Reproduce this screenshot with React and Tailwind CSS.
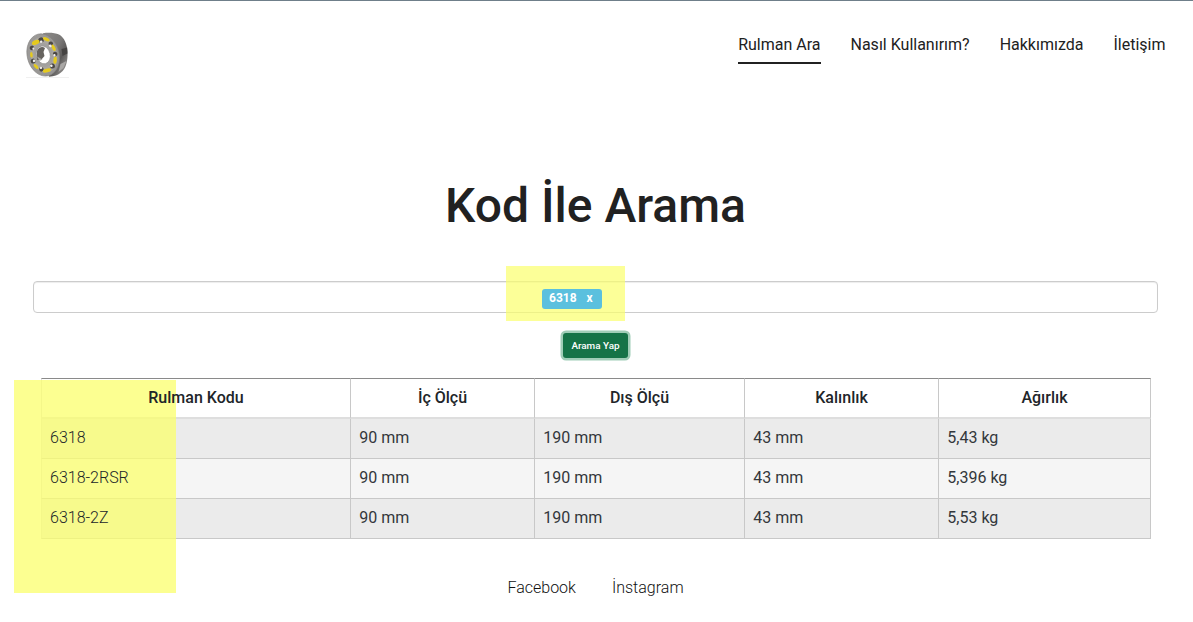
const navLinks = ['Rulman Ara', 'Nasıl Kullanırım?', 'Hakkımızda', 'İletişim'];

const columns = [
  { title: 'Rulman Kodu', width: 'w-[309px]' },
  { title: 'İç Ölçü', width: 'w-[184px]' },
  { title: 'Dış Ölçü', width: 'w-[210px]' },
  { title: 'Kalınlık', width: 'w-[194px]' },
  { title: 'Ağırlık', width: 'w-[212px]' },
];

const bearings = [
  { code: '6318', inner: '90 mm', outer: '190 mm', thickness: '43 mm', weight: '5,43 kg' },
  { code: '6318-2RSR', inner: '90 mm', outer: '190 mm', thickness: '43 mm', weight: '5,396 kg' },
  { code: '6318-2Z', inner: '90 mm', outer: '190 mm', thickness: '43 mm', weight: '5,53 kg' },
];

// Ball bearing seen from a slight angle
const Logo = () => (
  <svg width="44" height="48" viewBox="0 0 44 48">
    <defs>
      <linearGradient id="rim" x1="0" y1="0" x2="1" y2="1">
        <stop offset="0" stopColor="#8b8987" />
        <stop offset="0.45" stopColor="#7a7877" />
        <stop offset="0.65" stopColor="#5c5a59" />
        <stop offset="1" stopColor="#b1afad" />
      </linearGradient>
      <linearGradient id="face" x1="0" y1="0" x2="1" y2="1">
        <stop offset="0" stopColor="#9d9b99" />
        <stop offset="1" stopColor="#959391" />
      </linearGradient>
    </defs>
    <path d="M0 45.500h43" stroke="#ececec" strokeWidth="0.8" />
    <path d="M17 1.300C23 .3 29 1 33 2.500c5.500 3 8 10 8.500 17 .5 9-1.500 17.500-6.500 21-3 2.500-6.500 4-12 4.300Z" fill="url(#rim)" />
    <path d="M35.500 17l5.700-1.500.2 6-4.900 2.500Z" fill="#454342" />
    <path d="M34.500 32l6-3-3 7-5 4Z" fill="#a9a7a5" />
    <g transform="rotate(-14 17 23)">
      <ellipse cx="17.200" cy="23" rx="16" ry="21.400" fill="url(#face)" stroke="#807e7c" strokeWidth="0.6" />
      <ellipse cx="17.800" cy="23" rx="13.200" ry="18" fill="#aaa7a0" />
      <g fill="#4b4845">
        <circle cx="18.700" cy="8" r="2.700" />
        <circle cx="27.300" cy="14" r="2.300" />
        <circle cx="29" cy="25" r="2.300" />
        <circle cx="23.500" cy="36" r="2.500" />
        <circle cx="12" cy="36.500" r="2.300" />
        <circle cx="6" cy="26.500" r="2.400" />
        <circle cx="8" cy="13.500" r="2.300" />
      </g>
      <g fill="#e5ca1d">
        <ellipse cx="13" cy="9" rx="4" ry="2.200" transform="rotate(-8 13 9)" />
        <ellipse cx="24" cy="8.500" rx="3.500" ry="1.700" transform="rotate(38 24 8.500)" />
        <ellipse cx="29" cy="18.500" rx="1.600" ry="3.500" transform="rotate(-12 29 18.500)" />
        <ellipse cx="27.500" cy="31" rx="1.700" ry="3.600" transform="rotate(20 27.500 31)" />
        <ellipse cx="17" cy="39" rx="4.200" ry="1.900" />
        <ellipse cx="7.500" cy="32.500" rx="1.500" ry="3.100" transform="rotate(-28 7.500 32.500)" />
        <ellipse cx="5.800" cy="20" rx="1.300" ry="2.700" transform="rotate(10 5.800 20)" />
      </g>
      <g fill="#efedeb">
        <circle cx="18.500" cy="9.800" r="1.300" />
        <circle cx="26.200" cy="16" r="1.400" />
        <circle cx="28" cy="26" r="1.200" />
        <circle cx="22.500" cy="35.500" r="1.300" />
        <circle cx="12" cy="35" r="1.200" />
        <circle cx="7" cy="26.500" r="1.300" />
        <circle cx="9.300" cy="14.500" r="1.100" />
      </g>
      <ellipse cx="17.300" cy="23" rx="9.600" ry="12.300" fill="#a3a19f" />
      <ellipse cx="17.300" cy="23" rx="6.900" ry="9" fill="#fff" stroke="#8b8987" strokeWidth="0.6" />
    </g>
    {/* shaded inner wall of the bore */}
    <path d="M11 19c1.500-3.500 5-5 8-3l-1.500 4 1 4-3.500 4h-4Z" fill="#66635f" />
    <path d="M11 24.500l5.500 3-3 1.500Z" fill="#aaa8a6" />
  </svg>
);

const App = () => {
  return (
    <div className="h-[622px] overflow-hidden bg-white border-t border-[#6f7f8a] font-['Roboto',sans-serif] text-base text-[#212529]">
      <header className="flex h-[120px] items-start justify-between pl-[26px] pr-[27.500px]">
        <a href="#" className="mt-[31px]">
          <Logo />
        </a>
        <nav className="mt-8 flex gap-[30px] text-[#212121]">
          {navLinks.map((link, i) => (
            <a
              key={link}
              href="#"
              className={i === 0 ? 'h-[31px] border-b-2 border-[#212121] leading-6' : 'h-[31px] leading-6'}
            >
              {link}
            </a>
          ))}
        </nav>
      </header>

      <main>
        <h1 className="mt-14 pr-0.5 text-center text-5xl font-medium leading-[58px] text-[#212121]">
          Kod İle Arama
        </h1>

        <div className="relative ml-[33px] mt-[46px] flex h-8 w-[1125px] items-center rounded border border-[#ccc] pl-[508px] shadow-[inset_0_1px_1px_rgba(0,0,0,0.075)]">
          <div className="absolute -top-4 left-[472px] h-[55px] w-[119px] bg-[#fbff6c]/70" />
          <span className="relative mt-1 flex h-5 w-[60px] rounded-[3px] bg-[#5bc0de] pl-[7px] text-xs font-bold leading-[18px] text-white">
            6318<span className="ml-[10px]">x</span>
          </span>
        </div>

        <div className="mt-5 flex justify-center pr-0.5">
          <button className="h-[25px] w-[65px] rounded-[3px] bg-[#157347] pt-px text-[9.900px] font-medium text-white shadow-[0_0_0_2.500px_#a0cdb7]">
            Arama Yap
          </button>
        </div>

        <div className="relative ml-[41px] mt-5 w-[1110px]">
          <table className="w-full table-fixed border-separate border-spacing-0">
            <thead>
              <tr>
                {columns.map((col) => (
                  <th
                    key={col.title}
                    className={`${col.width} h-[41px] border-b-2 border-r border-t border-b-[#dedede] border-r-[#c8c8c8] border-t-[#8a8a8a] p-0 font-medium first:w-[310px] first:border-l first:border-l-[#dedede]`}
                  >
                    <span className="relative z-10">{col.title}</span>
                  </th>
                ))}
              </tr>
            </thead>
            <tbody>
              {bearings.map((row) => (
                <tr key={row.code} className="odd:bg-[#ebebeb] even:bg-[#f5f5f5]">
                  {Object.values(row).map((value, i) => (
                    <td
                      key={i}
                      className="h-10 border-b border-r border-[#c8c8c8] p-0 pb-0.5 pl-[8.300px] text-[#33373b] first:border-l first:border-l-[#dedede] first:pl-2 first:font-light first:text-[#212529]"
                    >
                      <span className="relative z-10">{value}</span>
                    </td>
                  ))}
                </tr>
              ))}
            </tbody>
          </table>
          <div className="absolute -left-[27px] top-0.5 h-[213px] w-[162px] bg-[#fbff6c]/75" />
        </div>
      </main>

      <footer className="mt-[37px] flex justify-center gap-9 pr-0.5 font-light leading-6 text-[#111]">
        <a href="#">Facebook</a>
        <a href="#">İnstagram</a>
      </footer>
    </div>
  );
};

export default App;
